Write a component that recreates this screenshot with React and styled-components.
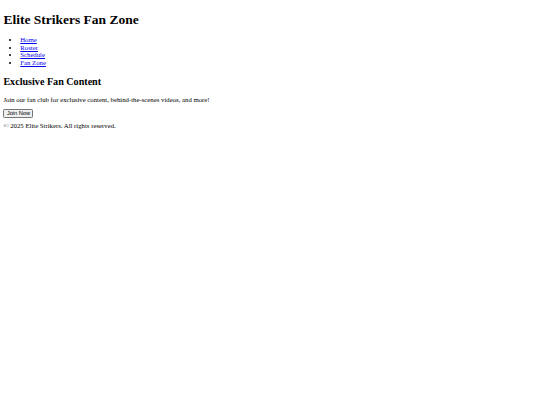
import React from "react";
import styled, { createGlobalStyle } from "styled-components";

const Global = createGlobalStyle`
  html, body { background: #fff; }
  body {
    margin: 3.375px;
    font-family: "Liberation Serif", "Times New Roman", serif;
    font-size: 6.75px;
    line-height: 7.67px;
    color: #000;
  }
`;

const Title = styled.h1`
  font-size: 13.5px;
  line-height: 15px;
  font-weight: bold;
  margin: 8.9px 0 0;
`;

const NavList = styled.ul`
  margin: 8.7px 0 0;
  padding-left: 16.875px;
  list-style: disc;
`;

const NavItem = styled.li`
  line-height: 7.67px;
`;

const NavLink = styled.a`
  color: #0000ee;
  text-decoration: underline;
`;

const Heading = styled.h2`
  font-size: 10.125px;
  line-height: 11.6px;
  font-weight: bold;
  margin: 9px 0 0;
`;

const Para = styled.p`
  margin: ${(p) => p.$top}px 0 0;
`;

const ButtonRow = styled.div`
  margin-top: 5.2px;
  height: 9.5px;
`;

const Button = styled.button`
  display: block;
  box-sizing: border-box;
  height: 9.5px;
  font-family: "Liberation Sans", Arial, sans-serif;
  font-size: 5.625px;
  line-height: 7px;
  padding: 0 2.53px;
  border: 0.84px solid #767676;
  border-radius: 1.27px;
  background: #efefef;
  color: #000;
  margin: 0;
`;

export default function App() {
  return (
    <>
      <Global />
      <header>
        <Title>Elite Strikers Fan Zone</Title>
        <nav>
          <NavList>
            {["Home", "Roster", "Schedule", "Fan Zone"].map((t) => (
              <NavItem key={t}>
                <NavLink href="#">{t}</NavLink>
              </NavItem>
            ))}
          </NavList>
        </nav>
      </header>
      <main>
        <section>
          <Heading>Exclusive Fan Content</Heading>
          <Para $top={8.5}>
            Join our fan club for exclusive content, behind-the-scenes videos, and more!
          </Para>
          <ButtonRow>
            <Button>Join Now</Button>
          </ButtonRow>
        </section>
      </main>
      <footer>
        <Para $top={3.8}>© 2025 Elite Strikers. All rights reserved.</Para>
      </footer>
    </>
  );
}
